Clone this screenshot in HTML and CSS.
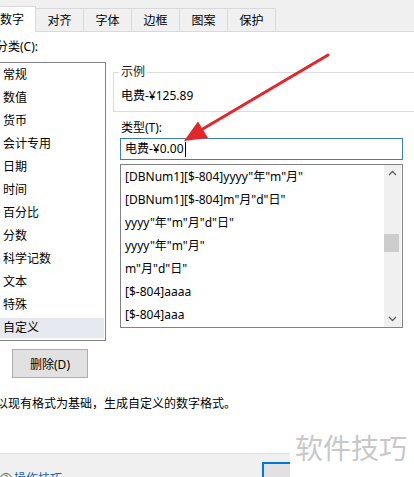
FILE: index.html
```html
<!DOCTYPE html>
<html lang="zh-CN">
<head>
<meta charset="utf-8">
<title>设置单元格格式</title>
<link rel="stylesheet" href="styles.css">
</head>
<body>
<div class="dialog">
  <div class="tabs">
    <div class="tab active">数字</div>
    <div class="tab">对齐</div>
    <div class="tab">字体</div>
    <div class="tab">边框</div>
    <div class="tab">图案</div>
    <div class="tab">保护</div>
  </div>
  <div class="content">
    <div class="left">
      <div class="label cat-label">分类(C):</div>
      <div class="catlist">
        <div class="cat">常规</div>
        <div class="cat">数值</div>
        <div class="cat">货币</div>
        <div class="cat">会计专用</div>
        <div class="cat">日期</div>
        <div class="cat">时间</div>
        <div class="cat">百分比</div>
        <div class="cat">分数</div>
        <div class="cat">科学记数</div>
        <div class="cat">文本</div>
        <div class="cat">特殊</div>
        <div class="cat selected">自定义</div>
      </div>
      <button class="btn del">删除(D)</button>
    </div>
    <div class="right">
      <fieldset class="sample">
        <legend>示例</legend>
        <div class="sample-text">电费-¥125.89</div>
      </fieldset>
      <div class="label type-label">类型(T):</div>
      <div class="input">电费-¥0.00<span class="caret"></span></div>
      <div class="typelist">
        <div class="types">
          <div class="type">[DBNum1][$-804]yyyy"年"m"月"</div>
          <div class="type">[DBNum1][$-804]m"月"d"日"</div>
          <div class="type">yyyy"年"m"月"d"日"</div>
          <div class="type">yyyy"年"m"月"</div>
          <div class="type">m"月"d"日"</div>
          <div class="type">[$-804]aaaa</div>
          <div class="type">[$-804]aaa</div>
        </div>
        <div class="scrollbar">
          <svg class="chev" width="17" height="17" viewBox="0 0 17 17"><path d="M5 10 L8.5 6.5 L12 10" fill="none" stroke="#606060" stroke-width="1.3"/></svg>
          <div class="track"><div class="thumb"></div></div>
          <svg class="chev" width="17" height="17" viewBox="0 0 17 17"><path d="M5 7 L8.5 10.5 L12 7" fill="none" stroke="#606060" stroke-width="1.3"/></svg>
        </div>
      </div>
    </div>
  </div>
  <div class="desc">以现有格式为基础，生成自定义的数字格式。</div>
  <div class="footer">
    <div class="help">
      <span class="help-icon">?</span>
      <span class="help-link">操作技巧</span>
    </div>
    <button class="btn ok">确定</button>
  </div>
</div>
<div class="watermark">软件技巧</div>
<svg class="arrow" width="414" height="477" viewBox="0 0 414 477">
  <line x1="328" y1="55" x2="201" y2="130" stroke="#e3262b" stroke-width="3" stroke-linecap="round"/>
  <polygon points="184,141 198,121.5 208,138" fill="#e3262b"/>
</svg>
</body>
</html>
```
FILE: styles.css
```css
* { box-sizing: border-box; }
html, body {
  margin: 0;
  padding: 0;
  width: 414px;
  height: 477px;
  overflow: hidden;
  background: #fff;
}
body {
  position: relative;
  font-family: "Noto Sans", "Noto Sans CJK SC", sans-serif;
  font-size: 12px;
  color: #000;
}
.dialog {
  margin-left: -12px;
  width: 440px;
}
.tabs {
  display: flex;
  align-items: flex-end;
  height: 32px;
  background: #f0f0f0;
  border-bottom: 1px solid #d9d9d9;
}
.tab {
  width: 48px;
  height: 24px;
  margin-bottom: -1px;
  border: 1px solid #d9d9d9;
  border-left: none;
  border-bottom: none;
  display: flex;
  align-items: center;
  justify-content: center;
  line-height: 16px;
  padding-top: 1px;
}
.tab.active {
  height: 26px;
  background: #fff;
  padding-top: 0;
  justify-content: flex-end;
  padding-right: 11px;
}
.content {
  display: flex;
  gap: 7px;
}
.left {
  width: 118px;
  display: flex;
  flex-direction: column;
}
.label {
  line-height: 16px;
  height: 16px;
}
.cat-label {
  margin-top: 7px;
  padding-left: 8px;
}
.catlist {
  margin-top: 7px;
  border: 1px solid #828282;
  padding: 2px 1px 2px 1px;
  display: flex;
  flex-direction: column;
  gap: 3px;
}
.cat {
  height: 20px;
  line-height: 20px;
  padding-left: 13px;
}
.cat.selected {
  background: #e6e9ef;
}
.btn {
  font: inherit;
  color: #000;
  background: #e1e1e1;
  border: 1px solid #adadad;
  padding: 0;
}
.del {
  margin-top: 8px;
  margin-left: 24px;
  width: 76px;
  height: 29px;
}
.right {
  flex: 1;
  display: flex;
  flex-direction: column;
}
.sample {
  margin: 32px 0 0 0;
  padding: 0 0 7px 5px;
  border: 1px solid #dcdcdc;
  border-right: none;
  min-width: 0;
}
.sample legend {
  padding: 0 2px;
  line-height: 16px;
  color: #1a1a1a;
}
.sample-text {
  margin-top: 8px;
  line-height: 16px;
  padding-left: 2px;
}
.type-label {
  margin-top: 8px;
  padding-left: 8px;
}
.input {
  margin-top: 2px;
  margin-left: 7px;
  width: 283px;
  height: 22px;
  border: 1px solid #3c7fb1;
  padding-left: 4px;
  line-height: 20px;
  display: flex;
  align-items: center;
}
.caret {
  display: inline-block;
  width: 1px;
  height: 15px;
  background: #000;
  margin-left: 1px;
}
.typelist {
  margin-top: 4px;
  margin-left: 7px;
  width: 283px;
  height: 164px;
  border: 1px solid #828282;
  display: flex;
}
.types {
  flex: 1;
  display: flex;
  flex-direction: column;
  padding-top: 0;
}
.type {
  height: 23px;
  line-height: 23px;
  padding-left: 4px;
  white-space: nowrap;
}
.scrollbar {
  width: 17px;
  margin-right: 1px;
  background: #f0f0f0;
  display: flex;
  flex-direction: column;
}
.chev {
  display: block;
  flex: none;
}
.track {
  flex: 1;
  padding-top: 52px;
}
.thumb {
  width: 15px;
  height: 18px;
  margin-left: 0;
  background: #cdcdcd;
}
.desc {
  margin-top: 18px;
  padding-left: 8px;
  line-height: 16px;
}
.footer {
  margin-top: 41px;
  height: 40px;
  background: #f0f0f0;
  border-top: 1px solid #dfdfdf;
  display: flex;
  align-items: flex-start;
}
.help {
  display: flex;
  align-items: center;
  gap: 2px;
  margin-top: 17px;
  margin-left: 12px;
}
.help-icon {
  width: 12px;
  height: 12px;
  border: 1px solid #2e7d32;
  border-radius: 50%;
  font-size: 8px;
  line-height: 10px;
  text-align: center;
  color: #2e7d32;
}
.help-link {
  color: #1a63b8;
  line-height: 16px;
}
.ok {
  margin-top: 8px;
  margin-left: 200px;
  width: 90px;
  height: 24px;
  border: 2px solid #0078d7;
}
.watermark {
  position: absolute;
  left: 290px;
  top: 424px;
  width: 124px;
  height: 53px;
  background: #fff;
  color: #c8c8c8;
  font-family: "Noto Sans CJK SC", sans-serif;
  font-size: 28px;
  line-height: 40px;
  padding-top: 3px;
  padding-left: 5px;
  white-space: nowrap;
}
.arrow {
  position: absolute;
  left: 0;
  top: 0;
  pointer-events: none;
}
```
